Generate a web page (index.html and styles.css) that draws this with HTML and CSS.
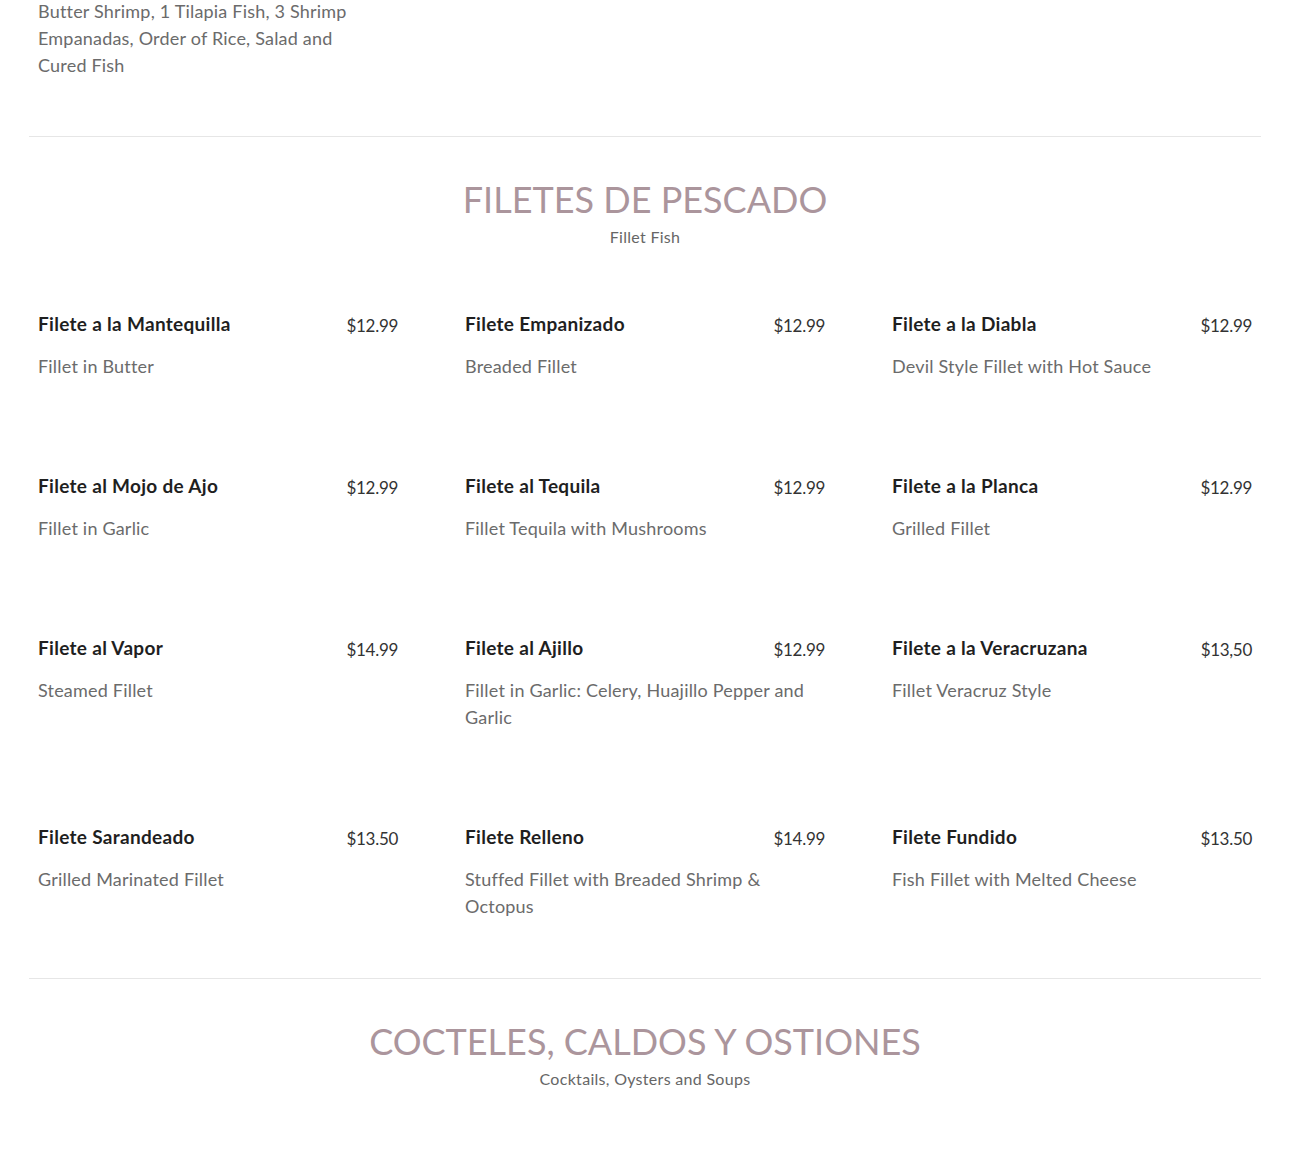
FILE: index.html
```html
<!DOCTYPE html>
<html lang="en">
<head>
<meta charset="utf-8">
<title>Menu</title>
<link rel="stylesheet" href="styles.css">
</head>
<body>
<div class="page">
  <div class="prev">
    <p class="desc prev-desc">Butter Shrimp, 1 Tilapia Fish, 3 Shrimp Empanadas, Order of Rice, Salad and Cured Fish</p>
  </div>
  <hr class="rule">
  <section class="section">
    <header class="sec-head">
      <h2 class="sec-title">FILETES DE PESCADO</h2>
      <p class="sec-sub">Fillet Fish</p>
    </header>
    <div class="grid">
      <div class="item"><div class="item-top"><h3 class="name">Filete a la Mantequilla</h3><span class="price">$12.99</span></div><p class="desc">Fillet in Butter</p></div>
      <div class="item"><div class="item-top"><h3 class="name">Filete Empanizado</h3><span class="price">$12.99</span></div><p class="desc">Breaded Fillet</p></div>
      <div class="item"><div class="item-top"><h3 class="name">Filete a la Diabla</h3><span class="price">$12.99</span></div><p class="desc">Devil Style Fillet with Hot Sauce</p></div>

      <div class="item"><div class="item-top"><h3 class="name">Filete al Mojo de Ajo</h3><span class="price">$12.99</span></div><p class="desc">Fillet in Garlic</p></div>
      <div class="item"><div class="item-top"><h3 class="name">Filete al Tequila</h3><span class="price">$12.99</span></div><p class="desc">Fillet Tequila with Mushrooms</p></div>
      <div class="item"><div class="item-top"><h3 class="name">Filete a la Planca</h3><span class="price">$12.99</span></div><p class="desc">Grilled Fillet</p></div>

      <div class="item"><div class="item-top"><h3 class="name">Filete al Vapor</h3><span class="price">$14.99</span></div><p class="desc">Steamed Fillet</p></div>
      <div class="item"><div class="item-top"><h3 class="name">Filete al Ajillo</h3><span class="price">$12.99</span></div><p class="desc">Fillet in Garlic: Celery, Huajillo Pepper and Garlic</p></div>
      <div class="item"><div class="item-top"><h3 class="name">Filete a la Veracruzana</h3><span class="price">$13,50</span></div><p class="desc">Fillet Veracruz Style</p></div>

      <div class="item"><div class="item-top"><h3 class="name">Filete Sarandeado</h3><span class="price">$13.50</span></div><p class="desc">Grilled Marinated Fillet</p></div>
      <div class="item"><div class="item-top"><h3 class="name">Filete Relleno</h3><span class="price">$14.99</span></div><p class="desc">Stuffed Fillet with Breaded Shrimp &amp; Octopus</p></div>
      <div class="item"><div class="item-top"><h3 class="name">Filete Fundido</h3><span class="price">$13.50</span></div><p class="desc">Fish Fillet with Melted Cheese</p></div>
    </div>
  </section>
  <hr class="rule">
  <section class="section">
    <header class="sec-head">
      <h2 class="sec-title">COCTELES, CALDOS Y OSTIONES</h2>
      <p class="sec-sub">Cocktails, Oysters and Soups</p>
    </header>
  </section>
</div>
</body>
</html>
```
FILE: styles.css
```css
* { box-sizing: border-box; }
html, body { margin: 0; padding: 0; background: #fff; }
body {
  font-family: "Lato", "Noto Sans", sans-serif;
  color: #666;
  width: 1290px;
  height: 1156px;
  overflow: hidden;
}
.page { padding: 0; }
.prev {
  margin: -2px 38px 0;
  width: 330px;
}
.desc {
  margin: 0;
  font-size: 18px;
  line-height: 27px;
  color: #6b6b6b;
  font-weight: 400;
  letter-spacing: 0.2px;
}
.rule {
  margin: 0 29px;
  border: 0;
  border-top: 1px solid #e6e6e6;
  height: 0;
}
.prev + .rule { margin-top: 57px; }
.section { padding-top: 39px; }
.sec-head { text-align: center; }
.sec-title {
  margin: 0;
  font-size: 36px;
  line-height: 47px;
  font-weight: 400;
  color: #ab959c;
  letter-spacing: 0;
}
.sec-sub {
  margin: 2px 0 0;
  font-size: 16px;
  line-height: 24px;
  color: #666;
  letter-spacing: 0.3px;
}
.grid {
  display: grid;
  grid-template-columns: repeat(3, 1fr);
  column-gap: 67px;
  row-gap: 92px;
  margin: 61px 38px 58px;
}
.item-top {
  display: flex;
  justify-content: space-between;
  align-items: flex-start;
}
.name {
  margin: 0;
  font-size: 19px;
  line-height: 27px;
  font-weight: 700;
  color: #1f1f1f;
  letter-spacing: 0.3px;
}
.price {
  font-size: 17px;
  line-height: 22px;
  margin-top: 5px;
  color: #333;
  font-weight: 400;
  letter-spacing: -0.3px;
}
.item .desc { margin-top: 16px; }
```
